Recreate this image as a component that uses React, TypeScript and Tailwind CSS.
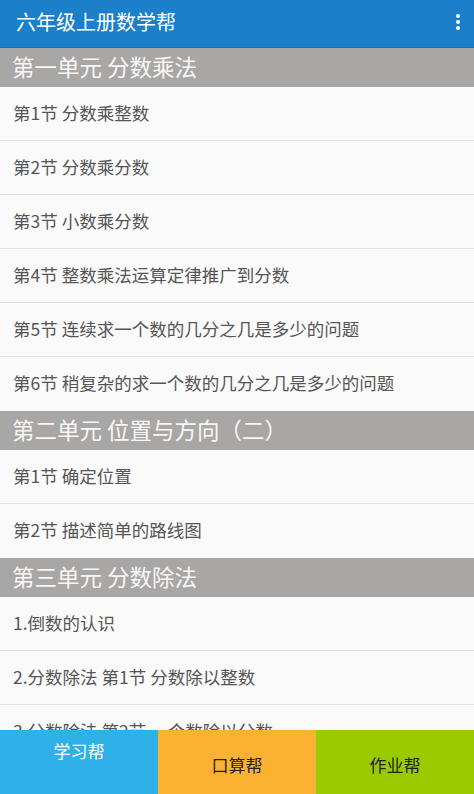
const units = [
  {
    title: '第一单元 分数乘法',
    items: [
      '第1节 分数乘整数',
      '第2节 分数乘分数',
      '第3节 小数乘分数',
      '第4节 整数乘法运算定律推广到分数',
      '第5节 连续求一个数的几分之几是多少的问题',
      '第6节 稍复杂的求一个数的几分之几是多少的问题',
    ],
  },
  {
    title: '第二单元 位置与方向（二）',
    items: ['第1节 确定位置', '第2节 描述简单的路线图'],
  },
  {
    title: '第三单元 分数除法',
    items: ['1.倒数的认识', '2.分数除法 第1节 分数除以整数', '3.分数除法 第2节 一个数除以分数'],
  },
];

const font = { fontFamily: '"Noto Sans CJK SC", "Noto Sans", sans-serif' };

export default function App() {
  return (
    <div className="flex h-[794px] w-[474px] flex-col overflow-hidden bg-[#fafafa]" style={font}>
      {/* App bar */}
      <header className="flex h-[48px] shrink-0 items-center justify-between border-b border-[#1670b3] bg-[#1b80c9] pb-[4px] pl-4 pr-[14px]">
        <span className="text-[20px] leading-none text-white">六年级上册数学帮</span>
        <div className="flex flex-col gap-[2px]">
          <span className="h-[4px] w-[4px] rounded-full bg-white" />
          <span className="h-[4px] w-[4px] rounded-full bg-white" />
          <span className="h-[4px] w-[4px] rounded-full bg-white" />
        </div>
      </header>

      {/* Chapter list */}
      <div className="flex-1 overflow-hidden">
        {units.map((unit) => (
          <div key={unit.title}>
            <div className="flex h-[39px] items-center bg-[#a9a7a5] px-3 pb-[3px] text-[22.5px] leading-none text-[#f7f7f7]">
              {unit.title}
            </div>
            {unit.items.map((item, i) => (
              <div
                key={item}
                className={
                  'flex h-[54px] items-center px-[13px] pb-[2px] text-[17.5px] leading-none text-[#555555] ' +
                  (i < unit.items.length - 1 ? 'border-b border-[#e2e2e2]' : '')
                }
              >
                {item}
              </div>
            ))}
          </div>
        ))}
      </div>

      {/* Bottom tabs */}
      <nav className="grid h-[64px] shrink-0 grid-cols-3">
        <div className="flex justify-center bg-[#2db1e6] pt-[12px] text-[17px] leading-none text-white">学习帮</div>
        <div className="flex items-center justify-center bg-[#fbb232] pt-[4px] text-[17px] leading-none text-[#222222]">口算帮</div>
        <div className="flex items-center justify-center bg-[#99cb00] pt-[4px] text-[17px] leading-none text-[#222222]">作业帮</div>
      </nav>
    </div>
  );
}
